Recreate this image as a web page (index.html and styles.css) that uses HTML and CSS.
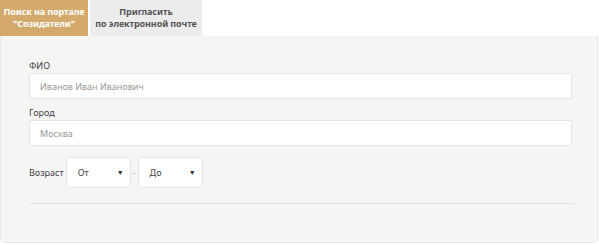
FILE: index.html
```html
<!DOCTYPE html>
<html lang="ru">
<head>
<meta charset="utf-8">
<link rel="stylesheet" href="styles.css">
</head>
<body>
<div class="widget">
  <div class="tabs">
    <div class="tab active">Поиск на портале<br>"Созидатели"</div>
    <div class="tab">Пригласить<br>по электронной почте</div>
  </div>
  <div class="panel">
    <div class="field">
      <label class="label">ФИО</label>
      <div class="input">Иванов Иван Иванович</div>
    </div>
    <div class="field">
      <label class="label">Город</label>
      <div class="input">Москва</div>
    </div>
    <div class="age">
      <span class="age-label">Возраст</span>
      <div class="select"><span>От</span><span class="caret">▼</span></div>
      <span class="dash">-</span>
      <div class="select"><span>До</span><span class="caret">▼</span></div>
    </div>
    <div class="rule"></div>
  </div>
</div>
</body>
</html>
```
FILE: styles.css
```css
html, body {
  margin: 0;
  padding: 0;
  background: #ffffff;
}
body {
  font-family: "Noto Sans", "Open Sans", sans-serif;
  color: #333;
}
.widget {
  width: 598px;
}
.tabs {
  display: flex;
  gap: 2px;
  height: 36px;
}
.tab {
  display: flex;
  align-items: center;
  justify-content: center;
  text-align: center;
  font-size: 9px;
  font-weight: bold;
  line-height: 12px;
  background: #ececec;
  color: #555;
  white-space: nowrap;
  box-sizing: border-box;
  letter-spacing: -0.1px;
}
.tab.active {
  background: #d3a96c;
  color: #fff;
  width: 88px;
}
.tab:not(.active) {
  width: 112px;
}
.panel {
  background: #f5f5f5;
  border: 1px solid #e9e9e9;
  border-top: none;
  border-radius: 0 0 5px 5px;
  height: 207px;
  box-sizing: border-box;
  padding: 24px 25px 0 28px;
}
.field {
  display: flex;
  flex-direction: column;
  margin-bottom: 8px;
}
.label {
  font-size: 9px;
  color: #444;
  line-height: 12px;
  margin-bottom: 1px;
}
.input {
  height: 26px;
  box-sizing: border-box;
  background: #fff;
  border: 1px solid #e3e3e3;
  border-radius: 2px;
  font-size: 9px;
  color: #999;
  display: flex;
  align-items: center;
  padding-left: 10px;
}
.age {
  display: flex;
  align-items: center;
  margin-top: 11px;
  font-size: 9px;
}
.age-label {
  color: #444;
  margin-right: 2px;
}
.select {
  width: 65px;
  height: 31px;
  box-sizing: border-box;
  background: #fff;
  border: 1px solid #e6e6e6;
  border-radius: 3px;
  display: flex;
  align-items: center;
  justify-content: space-between;
  padding: 0 6px 0 11px;
  color: #444;
}
.caret {
  font-size: 7px;
  color: #333;
}
.dash {
  color: #aaa;
  margin: 0 2px;
}
.rule {
  height: 1px;
  background: #e4e4e4;
  margin-top: 15px;
  margin-right: -2px;
}
```
